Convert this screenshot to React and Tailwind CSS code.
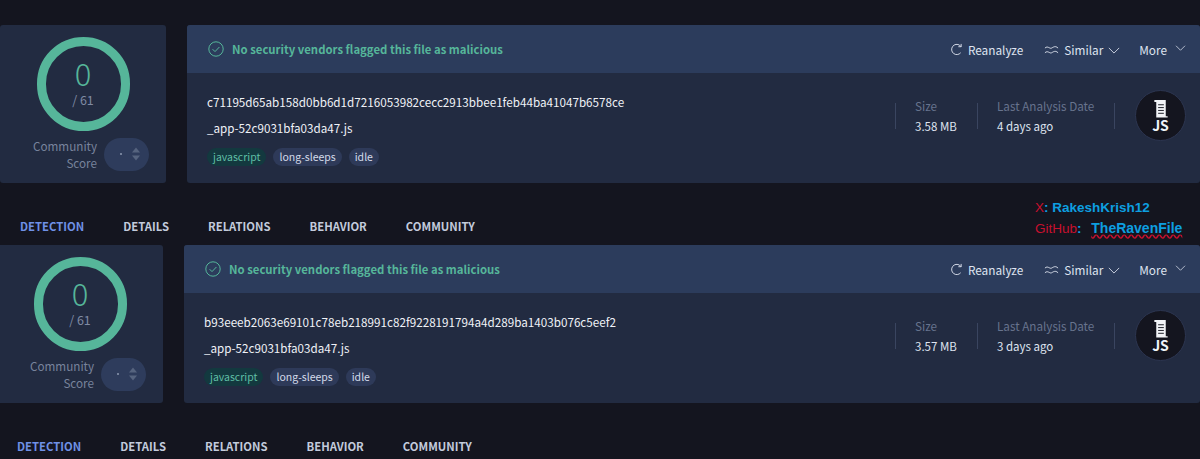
const font = { fontFamily: '"Noto Sans CJK JP", "Noto Sans", sans-serif' };

const tabs = ['DETECTION', 'DETAILS', 'RELATIONS', 'BEHAVIOR', 'COMMUNITY'];

const Chevron = ({ className }) => (
  <svg viewBox="0 0 14 8" className={className} fill="none" stroke="currentColor" strokeWidth="1">
    <path d="M1 1l6 6 6-6" />
  </svg>
);

const ScoreCard = () => (
  <div className="w-[166px] h-[158px] shrink-0 rounded-[3px] bg-[#222b41] flex flex-col items-center pt-3">
    <div className="w-[93px] h-[94px] rounded-full border-[9px] border-[#56b69a] flex flex-col items-center">
      <span className="text-[31px] leading-[30px] mt-[12px] text-[#56b69a] font-light">0</span>
      <span className="text-[12.5px] leading-[16px] mt-[4px] text-[#7f8aa3]">/ 61</span>
    </div>
    <div className="flex items-center mt-[6px] ml-[16px]">
      <div className="w-[64px] text-right text-[11.7px] leading-[17px] text-[#78839c]">Community<br />Score</div>
      <div className="ml-[7px] w-[45px] h-[33px] rounded-full bg-[#2e3c5c] flex items-center pl-[16px] gap-[10px]">
        <span className="w-[2px] h-[2px] rounded-full bg-[#8d98b0]" />
        <div className="flex flex-col gap-[2px]">
          <svg viewBox="0 0 8 5" className="w-[8px] h-[6px] fill-[#56647f]"><path d="M4 0l4 5H0z" /></svg>
          <svg viewBox="0 0 8 5" className="w-[8px] h-[6px] fill-[#56647f]"><path d="M0 0h8L4 5z" /></svg>
        </div>
      </div>
    </div>
  </div>
);

const Tag = ({ children, green }) => (
  <span className={`h-[18px] px-[6px] rounded-full text-[10.5px] leading-[18px] ${green ? 'bg-[#13393f] text-[#5fbfa5]' : 'bg-[#2e3a59] text-[#d4daea]'}`}>
    {children}
  </span>
);

const Stat = ({ label, value }) => (
  <div className="flex flex-col whitespace-nowrap">
    <span className="text-[11.7px] leading-[20px] text-[#67738d]">{label}</span>
    <span className="text-[11.5px] leading-[20px] text-[#dfe4f0]">{value}</span>
  </div>
);

const JsBadge = () => (
  <div className="w-[51px] h-[51px] rounded-full bg-[#14151f] border border-[#2c3550] flex flex-col items-center justify-center">
    <svg viewBox="0 0 16 20" className="w-[16px] h-[19px]">
      <path fill="#f2f4f8" d="M1 0h12v17h2v1.5H3V2H1z" />
      <path stroke="#14151f" strokeWidth="1" d="M5 5h6M5 8h6M5 11h6M5 14h6" />
    </svg>
    <span className="text-[14px] leading-[13px] font-bold text-[#f2f4f8]">JS</span>
  </div>
);

const MainCard = ({ hash, size, date }) => (
  <div className="flex-1 h-[158px] rounded-[3px] bg-[#222b41] overflow-hidden">
    <div className="h-[48px] bg-[#2c3c5c] flex items-center pl-[21px]">
      <svg viewBox="0 0 16 16" className="w-[16px] h-[16px] mr-[8px]" fill="none" stroke="#56b69a" strokeWidth="1">
        <circle cx="8" cy="8" r="7.2" />
        <path d="M4.6 8.2l2.4 2.4 4.4-4.6" />
      </svg>
      <span className="text-[11.35px] font-semibold mt-[2px] text-[#56b69a]">No security vendors flagged this file as malicious</span>
      <div className="ml-auto flex items-center mt-[1px] text-[11.8px] text-[#dfe4f0]">
        <svg viewBox="0 0 14 14" className="w-[13px] h-[13px] mr-[5px]" fill="none" stroke="currentColor" strokeWidth="1">
          <path d="M11.5 10.5A5.5 5.5 0 1 1 10.5 2.5L12 4M12 1v3H9" />
        </svg>
        <span>Reanalyze</span>
        <svg viewBox="0 0 16 10" className="w-[15px] h-[10px] ml-[21px] mr-[5px]" fill="none" stroke="currentColor" strokeWidth="1">
          <path d="M1 3c3-3 5 1 7 0s4-3 7 0M1 8c3-3 5 1 7 0s4-3 7 0" />
        </svg>
        <span>Similar</span>
        <Chevron className="w-[12px] h-[7px] ml-[5px] mt-[2px]" />
        <span className="ml-[19px]">More</span>
        <Chevron className="w-[11px] h-[6px] ml-[8px] mb-[3px] mr-[14px]" />
      </div>
    </div>
    <div className="flex h-[110px]">
      <div className="flex flex-col pl-[20px] pt-[19px]">
        <span className="text-[11.68px] leading-[20px] text-[#f0f2f7]">{hash}</span>
        <span className="text-[11.65px] leading-[20px] mt-[6px] text-[#f0f2f7]">_app-52c9031bfa03da47.js</span>
        <div className="flex gap-[7px] mt-[10px]">
          <Tag green>javascript</Tag>
          <Tag>long-sleeps</Tag>
          <Tag>idle</Tag>
        </div>
      </div>
      <div className="ml-auto flex items-start pt-[17px] pr-[14px]">
        <div className="flex items-center h-[51px]">
          <div className="w-px h-[26px] bg-[#3a4560]" />
          <div className="w-[81px] pl-[19px]"><Stat label="Size" value={size} /></div>
          <div className="w-px h-[26px] bg-[#3a4560]" />
          <div className="w-[136px] pl-[19px]"><Stat label="Last Analysis Date" value={date} /></div>
          <div className="w-px h-[26px] bg-[#3a4560]" />
          <div className="ml-[20px]"><JsBadge /></div>
        </div>
      </div>
    </div>
  </div>
);

const Section = ({ hash, size, date, className }) => (
  <div className={className}>
    <div className="flex gap-[21px]">
      <ScoreCard />
      <MainCard hash={hash} size={size} date={date} />
    </div>
    <div className="flex gap-[39px] pl-[20px] pt-[34px] h-[62px]">
      {tabs.map((tab, i) => (
        <span key={tab} className={`text-[11.3px] leading-[18px] font-semibold ${i === 0 ? 'text-[#6f91e6]' : 'text-[#c3cbdc]'}`}>{tab}</span>
      ))}
    </div>
  </div>
);

export default function App() {
  return (
    <div className="relative w-[1200px] h-[459px] overflow-hidden bg-[#14151f] pt-[25px]" style={font}>
      <Section hash="c71195d65ab158d0bb6d1d7216053982cecc2913bbee1feb44ba41047b6578ce" size="3.58 MB" date="4 days ago" />
      <Section className="ml-[-3px]" hash="b93eeeb2063e69101c78eb218991c82f9228191794a4d289ba1403b076c5eef2" size="3.57 MB" date="3 days ago" />
      <div className="absolute left-[1035px] top-[198px] text-[13.5px] leading-[20px] font-bold text-[#0d9fe0]" style={{ fontFamily: '"Liberation Sans", sans-serif' }}>
        <div><span className="text-[#c8102e] font-normal">X</span>: RakeshKrish12</div>
        <div className="whitespace-nowrap"><span className="text-[#c8102e] font-normal">GitHub</span>: <span className="ml-[6px] text-[14px] underline decoration-wavy decoration-[#c8102e]">TheRavenFile</span></div>
      </div>
    </div>
  );
}
